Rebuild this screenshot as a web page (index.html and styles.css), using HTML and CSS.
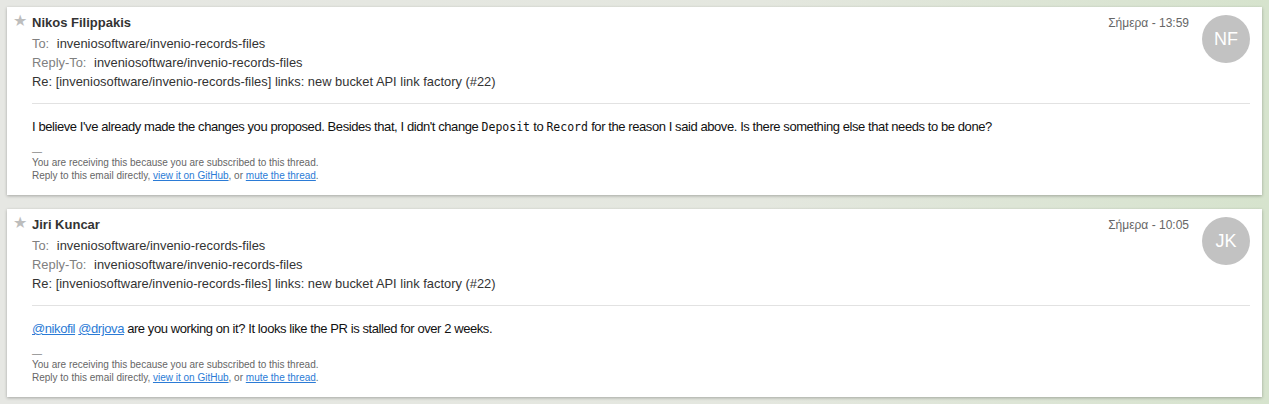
FILE: index.html
```html
<!DOCTYPE html>
<html>
<head>
<meta charset="utf-8">
<link rel="stylesheet" href="styles.css">
</head>
<body>
<div class="list">
  <div class="card">
    <div class="head">
      <div class="star">★</div>
      <div class="meta">
        <div class="name">Nikos Filippakis</div>
        <div class="line"><span class="label">To:</span> inveniosoftware/invenio-records-files</div>
        <div class="line"><span class="label">Reply-To:</span> inveniosoftware/invenio-records-files</div>
        <div class="line">Re: [inveniosoftware/invenio-records-files] links: new bucket API link factory (#22)</div>
      </div>
      <div class="date">Σήμερα - 13:59</div>
      <div class="avatar">NF</div>
    </div>
    <div class="body">
      <p class="msg">I believe I've already made the changes you proposed. Besides that, I didn't change <code>Deposit</code> to <code>Record</code> for the reason I said above. Is there something else that needs to be done?</p>
      <div class="foot">
        <div class="dash">—</div>
        <div>You are receiving this because you are subscribed to this thread.</div>
        <div>Reply to this email directly, <a href="#">view it on GitHub</a>, or <a href="#">mute the thread</a>.</div>
      </div>
    </div>
  </div>
  <div class="card">
    <div class="head">
      <div class="star">★</div>
      <div class="meta">
        <div class="name">Jiri Kuncar</div>
        <div class="line"><span class="label">To:</span> inveniosoftware/invenio-records-files</div>
        <div class="line"><span class="label">Reply-To:</span> inveniosoftware/invenio-records-files</div>
        <div class="line">Re: [inveniosoftware/invenio-records-files] links: new bucket API link factory (#22)</div>
      </div>
      <div class="date">Σήμερα - 10:05</div>
      <div class="avatar">JK</div>
    </div>
    <div class="body">
      <p class="msg"><a href="#">@nikofil</a> <a href="#">@drjova</a> are you working on it? It looks like the PR is stalled for over 2 weeks.</p>
      <div class="foot">
        <div class="dash">—</div>
        <div>You are receiving this because you are subscribed to this thread.</div>
        <div>Reply to this email directly, <a href="#">view it on GitHub</a>, or <a href="#">mute the thread</a>.</div>
      </div>
    </div>
  </div>
</div>
</body>
</html>
```
FILE: styles.css
```css
html, body {
  margin: 0;
  height: 100%;
}
body {
  background: linear-gradient(90deg, #e6e7e3 0%, #e4e7df 60%, #d6e3cd 100%);
  font-family: "Liberation Sans", Arial, sans-serif;
  color: #222;
}
.list {
  padding: 7px 7px 0 7px;
  display: flex;
  flex-direction: column;
  gap: 14px;
}
.card {
  background: #fff;
  box-shadow: 0 1px 3px rgba(0, 0, 0, 0.28);
  padding: 0 12px 0 0;
}
.head {
  display: flex;
  align-items: flex-start;
  border-bottom: 1px solid #e2e2e2;
  margin-left: 25px;
  position: relative;
  padding-top: 8px;
  height: 88px;
}
.star {
  position: absolute;
  left: -19px;
  top: 5px;
  font-size: 16px;
  line-height: 18px;
  color: #bdbdbd;
}
.meta {
  flex: 1;
  font-size: 12.9px;
  color: #333;
}
.name {
  font-weight: bold;
  font-size: 13px;
  line-height: 16px;
  margin-bottom: 3px;
}
.line {
  line-height: 19px;
}
.label {
  color: #808080;
  margin-right: 4px;
}
.date {
  font-size: 12px;
  color: #666;
  line-height: 16px;
  margin-right: 13px;
}
.avatar {
  width: 48px;
  height: 48px;
  border-radius: 50%;
  background: #c2c2c2;
  color: #fff;
  font-size: 18px;
  display: flex;
  align-items: center;
  justify-content: center;
}
.body {
  margin-left: 25px;
  padding-top: 14px;
  padding-bottom: 13px;
}
.msg {
  margin: 0;
  font-size: 13px;
  letter-spacing: -0.42px;
  line-height: 18px;
  color: #111;
}
.msg code {
  font-family: "DejaVu Sans Mono", monospace;
  font-size: 11.5px;
  letter-spacing: 0;
}
a {
  color: #2b7bd6;
  text-decoration: underline;
}
.foot {
  margin-top: 11px;
  font-size: 10px;
  line-height: 13px;
  letter-spacing: 0;
  color: #666;
}
.dash {
  line-height: 9px;
  color: #888;
}
```
